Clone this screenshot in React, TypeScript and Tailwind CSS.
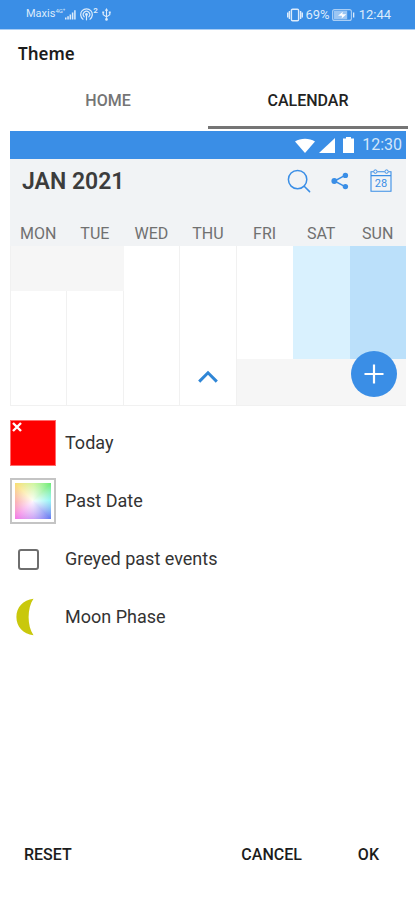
import { useState } from 'react';
import clsx from 'clsx';

type Tab = 'HOME' | 'CALENDAR';

const TABS: Tab[] = ['HOME', 'CALENDAR'];
const DAYS = ['MON', 'TUE', 'WED', 'THU', 'FRI', 'SAT', 'SUN'];

// ─── Status bar ───────────────────────────────────────────────────────────────

function StatusBar() {
  return (
    <header className="flex h-[30px] items-center justify-between border-b border-[#a9cdf4] bg-[#3a8ee6] pr-6 pl-[26px] text-[#dcebfb]">
      <div className="flex items-center">
        <span className="text-[11px]">Maxis</span>
        <span className="mb-2 text-[6px]">4G⁺</span>
        <svg width="11" height="11" viewBox="0 0 13 12" fill="currentColor" aria-hidden="true">
          <path d="M0 9.5h1.8V12H0zM2.7 8h1.8v4H2.7zM5.4 6h1.8v6H5.4zM8.1 3.5h1.8V12H8.1zM10.8 1h1.8v11h-1.8z" />
        </svg>
        <svg className="ml-1" width="13" height="13" viewBox="0 0 13 13" fill="none" stroke="currentColor" strokeWidth="1.2" strokeLinecap="round" aria-hidden="true">
          <path d="M3 11.2a5.8 5.8 0 1 1 7 0M4.2 8.8a3.2 3.2 0 1 1 4.6 0" />
          <path d="M6.5 7v4.8" />
          <circle cx="6.5" cy="6.5" r="0.8" fill="currentColor" />
        </svg>
        <span className="mb-2 text-[8px] font-bold">2</span>
        <svg className="ml-1" width="9" height="13" viewBox="0 0 9 13" fill="none" stroke="currentColor" strokeWidth="1.1" aria-hidden="true">
          <path d="M4.5 2v9M1.2 4.5v2.3l3.3 2.1 3.3-2.1V4.5" />
          <path d="M4.5 0l1.7 2.7H2.8zM.3 3.5h1.9v1.7H.3zM6.8 3.5h1.9v1.7H6.8z" fill="currentColor" stroke="none" />
          <circle cx="4.5" cy="11.4" r="1.3" fill="currentColor" stroke="none" />
        </svg>
      </div>

      <div className="flex items-center">
        <svg width="16" height="14" viewBox="0 0 16 14" fill="none" stroke="currentColor" strokeWidth="1.4" aria-hidden="true">
          <rect x="4.4" y="1.2" width="7.2" height="11.6" rx="1.2" />
          <path d="M2.4 3v8M.7 4.5v5M13.6 3v8M15.3 4.5v5" />
        </svg>
        <span className="ml-0.5 text-[13px]">69%</span>
        <svg className="ml-0.5" width="23" height="12" viewBox="0 0 23 12" aria-hidden="true">
          <rect x=".6" y=".6" width="18.8" height="10.8" rx="2" fill="none" stroke="currentColor" strokeOpacity=".7" strokeWidth="1.1" />
          <rect x="1.8" y="1.8" width="13.4" height="8.4" rx=".6" fill="currentColor" fillOpacity=".6" />
          <path d="M6 6.8 10.8 2.8l-.4 2.4h4L9.6 9.4l.4-2.6z" fill="#fff" />
          <path d="M21 3.4h1.3v5.2H21z" fill="currentColor" />
        </svg>
        <span className="ml-1 text-[13px]">12:44</span>
      </div>
    </header>
  );
}

// ─── Calendar preview ─────────────────────────────────────────────────────────

function PreviewToolbar() {
  return (
    <div className="flex items-center text-[#3a8ee6]">
      <svg width="24" height="24" viewBox="0 0 24 24" fill="none" stroke="currentColor" strokeWidth="1.5" strokeLinecap="round" aria-hidden="true">
        <circle cx="10.6" cy="10.6" r="9.2" />
        <path d="M17.2 17.2l5.4 5.4" />
      </svg>
      <svg className="mr-5 ml-5" width="18" height="18" viewBox="0 0 18 18" aria-hidden="true">
        <path d="M14.5 3.2 3.5 9l11 5.8" fill="none" stroke="currentColor" strokeWidth="1.5" />
        <g fill="currentColor">
          <circle cx="14.4" cy="3.4" r="2.7" />
          <circle cx="3.3" cy="9" r="2.9" />
          <circle cx="14.4" cy="14.6" r="2.7" />
        </g>
      </svg>
      <svg width="24" height="23" viewBox="0 0 22 23" aria-hidden="true">
        <path d="M3.4 2.8H1v19.4h20V2.8h-2.4M7.4 2.8h7.2M1 6.6h20" fill="none" stroke="currentColor" strokeWidth="1.1" />
        <circle cx="5.4" cy="2.6" r="1.7" fill="none" stroke="currentColor" />
        <circle cx="16.6" cy="2.6" r="1.7" fill="none" stroke="currentColor" />
        <text x="11" y="18" textAnchor="middle" fontSize="11" fill="currentColor">28</text>
      </svg>
    </div>
  );
}

function CalendarPreview() {
  return (
    <section className="relative mt-0.5 mr-[9px] ml-[10px]">
      <div className="flex h-7 items-center justify-end bg-[#3a8ee6] pr-1 text-white">
        <svg width="20" height="15" viewBox="0 0 20 15" fill="currentColor" aria-hidden="true">
          <path d="M0 3.4C5.6-.2 14.4-.2 20 3.4L10 15z" />
        </svg>
        <svg className="ml-1" width="16" height="15" viewBox="0 0 16 15" fill="currentColor" aria-hidden="true">
          <path d="M16 0v15H0z" />
        </svg>
        <svg className="ml-2" width="11" height="16" viewBox="0 0 11 16" fill="currentColor" aria-hidden="true">
          <path d="M3 0h5v1.5h3V16H0V1.5h3z" />
        </svg>
        <span className="ml-2 text-base text-[#d3e6fa]">12:30</span>
      </div>

      <div className="bg-[#f1f3f5]">
        <div className="flex h-[43px] items-center justify-between pr-[13px] pl-3">
          <h2 className="pt-1 text-[23px] font-semibold text-[#3c3c3c]">JAN 2021</h2>
          <PreviewToolbar />
        </div>
        <div className="grid grid-cols-7 pt-5 text-center text-base leading-6 text-[#707070]">
          {DAYS.map(day => <span key={day}>{day}</span>)}
        </div>
      </div>

      <div className="grid grid-cols-7 border-b border-l border-[#f1f1f1] bg-[#f6f6f6]">
        <div className="mt-[45px] h-[114px] border-r border-[#f1f1f1] bg-white" />
        <div className="mt-[45px] h-[114px] border-r border-[#f1f1f1] bg-white" />
        <div className="border-r border-[#f1f1f1] bg-white" />
        <div className="flex items-end justify-center border-r border-[#f1f1f1] bg-white pb-[22px]">
          <svg width="20" height="13" viewBox="0 0 20 13" fill="none" stroke="#2f86d6" strokeWidth="3" aria-hidden="true">
            <path d="M1.2 11.6 10 2.8l8.8 8.8" />
          </svg>
        </div>
        <div className="mb-[46px] bg-white" />
        <div className="mb-[46px] bg-[#d9f1fe]" />
        <div className="mb-[46px] bg-[#bbe0fa]" />
      </div>

      <button
        type="button"
        aria-label="Add event"
        className="absolute right-[9px] bottom-[9px] flex size-[46px] items-center justify-center rounded-full bg-[#3a8ee6]"
      >
        <svg width="20" height="20" viewBox="0 0 20 20" stroke="#fff" strokeWidth="2.2" aria-hidden="true">
          <path d="M10 .5v19M.5 10h19" />
        </svg>
      </button>
    </section>
  );
}

// ─── Settings rows ────────────────────────────────────────────────────────────

const ROW = 'flex h-[58px] w-full items-center text-left text-lg text-[#333]';
const ROW_ICON = 'mr-[9px] flex w-[46px] shrink-0';

function SettingsList() {
  const [greyed, setGreyed] = useState(false);

  return (
    <div className="mt-2 px-[10px]">
      <button type="button" className={ROW}>
        <span className={ROW_ICON}>
          <span className="size-[46px] border border-[#ff6b6b] bg-[#fe0000]">
            <svg className="mt-px ml-px" width="10" height="10" viewBox="0 0 10 10" stroke="#fff" strokeWidth="2.4" aria-hidden="true">
              <path d="M1 1l8 8M9 1 1 9" />
            </svg>
          </span>
        </span>
        Today
      </button>

      <button type="button" className={ROW}>
        <span className={ROW_ICON}>
          <span className="size-[46px] border-2 border-[#c4c4c4] bg-white p-[3px]">
            <span className="block size-full bg-[radial-gradient(circle_at_center,#fffffff2,#ffffff99_45%,#ffffff26_100%),conic-gradient(from_45deg,#50e85c,#50f0f0_12%,#4860ee_25%,#a868f0_37%,#f060e0_50%,#f98080_62%,#f8d858_75%,#b0f060_88%,#50e85c)]" />
          </span>
        </span>
        Past Date
      </button>

      <label className={ROW}>
        <span className={clsx(ROW_ICON, 'pl-2')}>
          <input
            type="checkbox"
            checked={greyed}
            onChange={e => setGreyed(e.target.checked)}
            className="size-[21px] appearance-none rounded-[3px] border-2 border-[#6e6e6e] bg-white checked:bg-[#6e6e6e]"
          />
        </span>
        Greyed past events
      </label>

      <button type="button" className={ROW}>
        <span className={clsx(ROW_ICON, 'pl-1.5')}>
          <svg width="19" height="38" viewBox="0 0 19 38" fill="#c9c80c" aria-hidden="true">
            <path d="M17.5 .8C7 1.8 .4 9.5 .4 19S7 36.2 17.5 37.2C11 28 11 10 17.5 .8z" />
          </svg>
        </span>
        Moon Phase
      </button>
    </div>
  );
}

// ─── Page ─────────────────────────────────────────────────────────────────────

export default function App() {
  const [tab, setTab] = useState<Tab>('CALENDAR');

  return (
    <div className="flex min-h-screen flex-col bg-white font-['Roboto',sans-serif]">
      <StatusBar />
      <h1 className="px-[18px] pt-3 pb-2.5 font-['Noto_Sans',sans-serif] text-[17px] leading-6 font-semibold text-[#1c1c1c]">Theme</h1>

      <div role="tablist" className="mr-[7px] ml-2 flex">
        {TABS.map(name => (
          <button
            key={name}
            type="button"
            role="tab"
            aria-selected={tab === name}
            onClick={() => setTab(name)}
            className={clsx(
              'h-[53px] flex-1 border-b-3 text-base font-medium',
              tab === name ? 'border-[#757575] text-[#222]' : 'border-transparent text-[#757575]',
            )}
          >
            {name}
          </button>
        ))}
      </div>

      <CalendarPreview />
      <SettingsList />

      <footer className="mt-auto flex items-center px-6 pb-[33px] text-base leading-6 font-medium text-[#1c1c1c]">
        <button type="button" className="mr-auto">RESET</button>
        <button type="button">CANCEL</button>
        <button type="button" className="mr-3 ml-14">OK</button>
      </footer>
    </div>
  );
}
